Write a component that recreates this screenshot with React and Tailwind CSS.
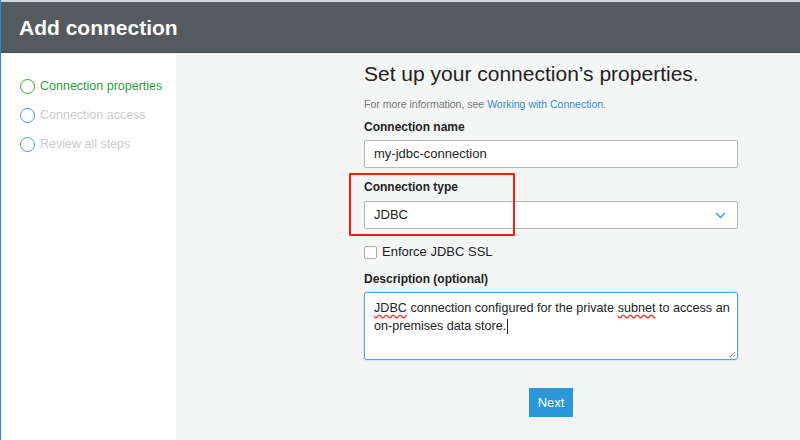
import React from 'react';

const font = { fontFamily: '"Liberation Sans", Arial, sans-serif' };

const steps = [
  { label: 'Connection properties', active: true },
  { label: 'Connection access', active: false },
  { label: 'Review all steps', active: false },
];

const StepCircle = ({ active }) => (
  <span
    className={`w-[15px] h-[15px] rounded-full border-[1.5px] shrink-0 ${
      active ? 'border-[#3aa63a]' : 'border-[#3d9be0]'
    }`}
  />
);

const App = () => {
  return (
    <div
      className="w-[800px] h-[440px] flex flex-col border-l border-[#1a8fe8] overflow-hidden"
      style={font}
    >
      <div className="h-[2px] bg-[#cfd6db]" />
      <div className="h-[51px] bg-[#545b5e] border-b border-[#3f4649] flex items-center pl-[18px]">
        <h1 className="text-white font-bold text-[21px] leading-none">Add connection</h1>
      </div>

      <div className="flex flex-1">
        {/* steps */}
        <div className="w-[175px] bg-white pt-[26px] pl-[19px] flex flex-col gap-[14px]">
          {steps.map((s) => (
            <div key={s.label} className="flex items-center gap-[5px] h-[15px]">
              <StepCircle active={s.active} />
              <span
                className={`text-[12.5px] leading-none ${
                  s.active ? 'text-[#2f9e3a]' : 'text-[#c9cccd]'
                }`}
              >
                {s.label}
              </span>
            </div>
          ))}
        </div>

        {/* form */}
        <div className="flex-1 bg-[#f4f5f5] pl-[188px] pt-[9px]">
          <div className="w-[374px] relative">
            <h2 className="text-[21px] leading-[24px] text-[#222]">
              Set up your connection’s properties.
            </h2>
            <p className="mt-[11px] text-[10.5px] leading-[14px] text-[#767676]">
              For more information, see{' '}
              <span className="text-[#2d8fd5]">Working with Connection.</span>
            </p>

            <label className="block mt-[8px] text-[12px] leading-[16px] font-bold text-[#222]">
              Connection name
            </label>
            <div className="mt-[5px] h-[28px] bg-white border border-[#b8b8b8] rounded-[2px] flex items-center px-[9px] text-[13px] text-[#222]">
              my-jdbc-connection
            </div>

            <label className="block mt-[11px] text-[12px] leading-[16px] font-bold text-[#222]">
              Connection type
            </label>
            <div className="mt-[6px] h-[28px] bg-white border border-[#b8b8b8] rounded-[2px] flex items-center justify-between pl-[9px] pr-[11px] text-[13px] text-[#222]">
              <span>JDBC</span>
              <svg width="11" height="7" viewBox="0 0 11 7" fill="none">
                <path d="M1 1l4.5 4.5L10 1" stroke="#3d9be0" strokeWidth="1.5" />
              </svg>
            </div>

            {/* annotation box */}
            <div className="absolute left-[-15px] top-[111px] w-[166px] h-[63px] border-2 border-[#f01e14] rounded-[1px]" />

            <div className="mt-[16px] flex items-center gap-[5px]">
              <span className="w-[13px] h-[13px] bg-white border border-[#a9a9a9] rounded-[2px]" />
              <span className="text-[13px] leading-[14px] text-[#222]">Enforce JDBC SSL</span>
            </div>

            <label className="block mt-[12px] text-[12px] leading-[16px] font-bold text-[#222]">
              Description (optional)
            </label>
            <div className="relative mt-[5px] h-[68px] bg-white border border-[#5d9fe3] rounded-[3px] shadow-[0_0_2px_rgba(61,155,224,0.5)] pl-[9px] pr-[6px] pt-[6px] text-[12.6px] leading-[18px] text-[#222] underline-offset-2 decoration-1">
              <div className="flex whitespace-pre">
                <span className="underline decoration-wavy decoration-[#e33]">JDBC</span>
                <span> connection configured for the private </span>
                <span className="underline decoration-wavy decoration-[#e33]">subnet</span>
                <span> to access an</span>
              </div>
              <div className="flex items-center">
                <span>on-premises data store.</span>
                <span className="w-px h-[15px] bg-[#222] ml-px" />
              </div>
              <svg className="absolute right-[1px] bottom-[1px]" width="8" height="8" viewBox="0 0 8 8">
                <path d="M7 2L2 7M7 5L5 7" stroke="#999" strokeWidth="1" />
              </svg>
            </div>

            <div className="flex justify-center mt-[28px]">
              <button className="w-[44px] h-[29px] bg-[#2b97d8] text-white text-[13px]">
                Next
              </button>
            </div>
          </div>
        </div>
      </div>
    </div>
  );
};

export default App;
